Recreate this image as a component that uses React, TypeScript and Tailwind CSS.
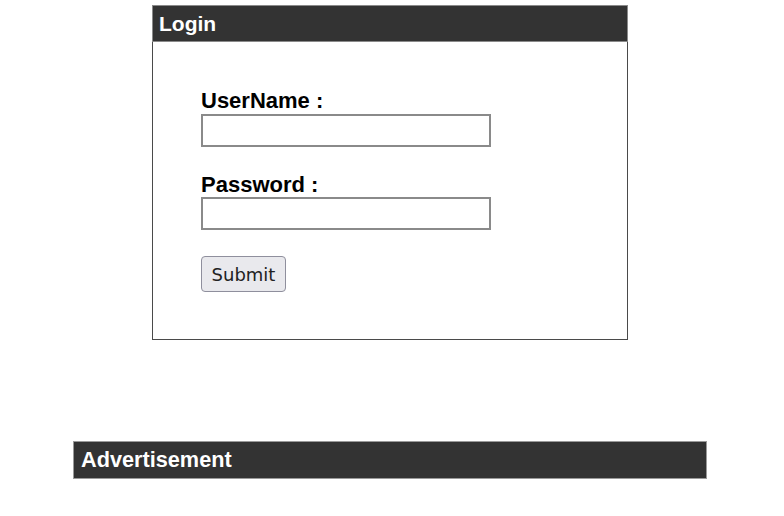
export default function App() {
  return (
    <div className="flex min-h-[516px] flex-col bg-white font-['Liberation_Sans',Arial,sans-serif]">
      <div className="ml-[152px] mt-[5px] flex h-[335px] w-[476px] flex-col border border-[#4a4a4a]">
        <div className="-mx-px -mt-px flex h-[37px] items-center border border-[#8a8a8a] bg-[#333333] px-[6px] text-[21px] font-bold text-white">
          Login
        </div>
        <form className="flex flex-col pl-[48px] pt-[47px]" onSubmit={(e) => e.preventDefault()}>
          <label className="text-[22px] font-bold leading-[24px] text-black">UserName :</label>
          <input type="text" className="mt-[1px] h-[33px] w-[290px] border-2 border-[#8a8a8a] bg-white" />
          <label className="mt-[26px] text-[22px] font-bold leading-[24px] text-black">Password :</label>
          <input type="password" className="h-[33px] w-[290px] border-2 border-[#8a8a8a] bg-white" />
          <button
            type="submit"
            className="mt-[26px] h-[36px] w-[85px] rounded-[4px] border border-[#8f8f9d] bg-[#e9e9ed] font-['DejaVu_Sans',sans-serif] text-[18px] text-[#222]"
          >
            Submit
          </button>
        </form>
      </div>
      <div className="ml-[73px] mt-[101px] flex h-[38px] w-[634px] items-center border border-[#9a9a9a] bg-[#333333] px-[7px] text-[21.7px] font-bold text-white">
        Advertisement
      </div>
    </div>
  );
}
